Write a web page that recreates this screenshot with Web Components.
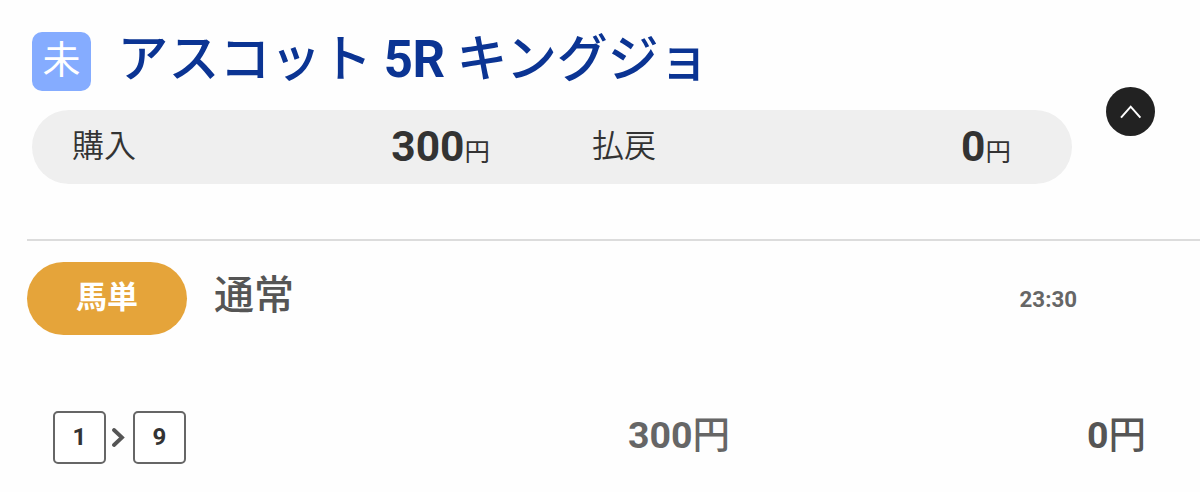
<!DOCTYPE html>
<html lang="ja"><head><meta charset="utf-8"><title>投票履歴</title>
<style>
html,body{margin:0;background:#fefefe}
body{font-family:Roboto,"Noto Sans CJK JP",sans-serif;color:#333;height:492px;overflow:hidden}
</style></head><body>
<bet-card></bet-card>
<script>
function define(name, html){
  customElements.define(name, class extends HTMLElement{
    constructor(){
      super();
      const t=document.createElement('template');
      t.innerHTML=html;
      this.attachShadow({mode:'open'}).append(t.content.cloneNode(true));
    }
  });
}
define('status-badge', `<style>
:host{display:flex;justify-content:center;width:59px;height:59px;border-radius:10px;background:#85acff;color:#fff;font-size:38px;line-height:57px;font-weight:400}
</style><slot></slot>`);
define('race-title', `<style>
:host{display:block;color:#0b3493;font-size:50.9px;line-height:60px;font-weight:500;white-space:nowrap;word-spacing:-1px}
::slotted(b){font-weight:700;letter-spacing:-.3px}
</style><slot></slot>`);
define('money-amount', `<style>
:host{display:block;white-space:nowrap;font-size:42.5px;line-height:50px;font-weight:700}
.u{font-size:var(--unit,25.5px);font-weight:var(--unit-weight,400)}
</style><slot></slot><span class="u">円</span>`);
define('summary-pill', `<style>
:host{display:grid;grid-template-columns:418px 1fr;box-sizing:border-box;width:1040px;height:74px;border-radius:37px;background:#efefef;padding:0 61px 0 40px;align-items:start}
.l{font-size:32px;line-height:40px;font-weight:350;padding-top:16px}
money-amount{padding-top:12px}
.l2{padding-left:102px}
.r{display:flex;justify-content:space-between}
</style>
<div class="r"><span class="l">購入</span><money-amount>300</money-amount></div>
<div class="r l2"><span class="l">払戻</span><money-amount>0</money-amount></div>`);
define('collapse-button', `<style>
:host{display:block;width:49px;height:49px}
svg{display:block}
</style><svg width="49" height="49" viewBox="0 0 49 49"><circle cx="24.5" cy="24.5" r="24.5" fill="#222"/><path d="M15 30.7 24.7 19.7 34.4 30.7" fill="none" stroke="#fff" stroke-width="2"/></svg>`);
define('bet-type', `<style>
:host{display:flex;justify-content:center;width:160px;height:73px;border-radius:36.5px;background:#e5a43a;color:#fff;font-size:31px;line-height:71px;font-weight:700}
</style><slot></slot>`);
define('horse-number', `<style>
:host{display:flex;justify-content:center;box-sizing:border-box;width:53px;height:53px;border:2px solid #666;border-radius:5px;font-size:24px;line-height:48px;font-weight:700;background:#fff}
</style><slot></slot>`);
define('bet-card', `<style>
:host{display:block;width:1200px}
.head{display:flex;height:239px;padding-left:32px;box-sizing:border-box}
.left{width:1073.5px}
.title{display:flex;height:110px;box-sizing:border-box;padding-top:32px}
race-title{margin-left:26.6px;margin-top:-2px}
collapse-button{margin-top:87px}
.rule{height:2px;background:#dcdcdc;margin-left:27px}
.type{display:flex;padding:21px 123px 0 27px;height:170px;box-sizing:border-box;color:#555}
.mode{font-size:40px;line-height:60px;font-weight:500;margin:4px auto 0 27px}
.time{font-size:22.3px;line-height:28px;font-weight:700;margin-top:23px;color:#666}
.line{display:grid;grid-template-columns:53px 27px 53px 1fr 416px;padding:0 54px 0 53px;color:#666}
.line svg{display:block;margin-top:17px}
horse-number{color:#333}
money-amount{font-size:37.5px;--unit:37.5px;--unit-weight:500;justify-self:end;line-height:49px}
.pay{color:#555}
</style>
<div class="head"><div class="left"><div class="title"><status-badge>未</status-badge><race-title>アスコット <b>5R</b> キングジョ</race-title></div><summary-pill></summary-pill></div><collapse-button></collapse-button></div>
<div class="rule"></div>
<div class="type"><bet-type>馬単</bet-type><span class="mode">通常</span><span class="time">23:30</span></div>
<div class="line"><horse-number>1</horse-number>
<svg width="27" height="20" viewBox="0 0 27 20"><path d="M8 2 16 9.5 8 17" fill="none" stroke="#555" stroke-width="3.8" stroke-linecap="round"/></svg>
<horse-number>9</horse-number><money-amount>300</money-amount><money-amount class="pay">0</money-amount></div>`);
</script></body></html>
